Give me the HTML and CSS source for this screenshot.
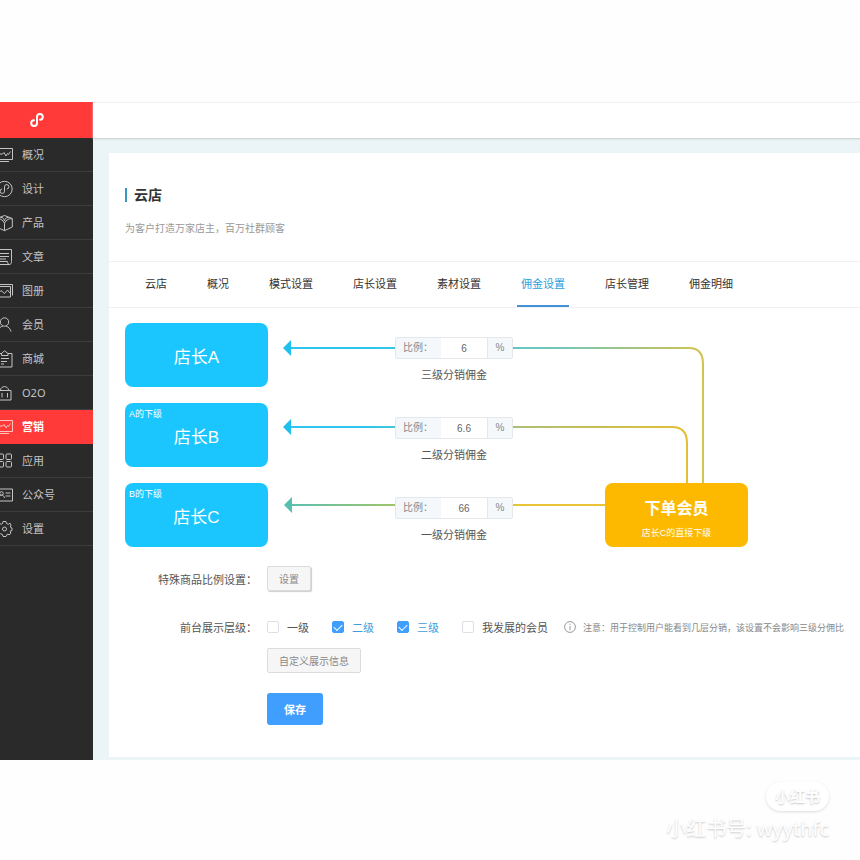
FILE: index.html
```html
<!DOCTYPE html>
<html lang="zh-CN">

<head>
    <meta charset="UTF-8">
    <meta name="viewport" content="width=device-width, initial-scale=1.0">
    <title>云店 - 佣金设置</title>
    <link rel="stylesheet" href="styles.css">
</head>

<body>
    <div class="app">
        <aside class="sidebar">
            <a href="#" class="logo" aria-label="首页">
                <svg width="14" height="14" viewBox="0 0 14 14">
                    <path d="M4 7.2A2.900 2.900 0 1 0 7 10V4A2.900 2.900 0 1 1 10 6.800" />
                </svg>
            </a>
            <nav class="menu">
                <a href="#">
                    <svg viewBox="5 0 13 18">
                        <path d="M1 2.5H17.5V13.5H1ZM2 15.5H14M3 8H7.5L9 6.5L11 10L12.5 7.5L13.5 8.5L15.5 5.5" />
                    </svg>
                    <span>概况</span>
                </a>
                <a href="#">
                    <svg viewBox="5 0 13 18">
                        <circle cx="9.5" cy="9" r="7.7" />
                        <path d="M7.2 9A2.200 2.200 0 1 0 9.5 11.200V6.800A2.200 2.200 0 1 1 11.800 9" />
                    </svg>
                    <span>设计</span>
                </a>
                <a href="#">
                    <svg viewBox="5 0 13 18">
                        <path d="M9.5 1.5L17.3 4.5V13L9.5 16.7L1.7 13V4.5ZM9.5 9.5V16.5M9.5 9.5C8 5.500 4 4 2 5M9.5 9.5C11 5.500 15 4 17 5M5.500 3.500C8 3 9 5 9.5 7C10 5 11 3 13.500 3.500" />
                    </svg>
                    <span>产品</span>
                </a>
                <a href="#">
                    <svg viewBox="5 0 13 18">
                        <path d="M3 1.500H16.500V13.500C16.500 17.500 12.500 17.500 12.500 13.500H1M4 16.500H14.500M5 5.500H14M5 8.500H14M5 11H11" />
                    </svg>
                    <span>文章</span>
                </a>
                <a href="#">
                    <svg viewBox="5 0 13 18">
                        <path d="M1 4.500H15.500V15H1ZM3 2.500H17.500V13.500M2 13L6 8.500L9.500 11.500L12.500 8L15 11" />
                    </svg>
                    <span>图册</span>
                </a>
                <a href="#">
                    <svg viewBox="5 0 13 18">
                        <circle cx="9.5" cy="6" r="4.200" />
                        <path d="M3 16C3.500 12 6 10.500 8 10M11 10C13.500 11 15.500 13 16 15.500" />
                    </svg>
                    <span>会员</span>
                </a>
                <a href="#">
                    <svg viewBox="5 0 13 18">
                        <path d="M7 3.500H2.500V17H17V3.500H13M6.500 5.500V3.500L9.5 0.800L13 3.500V5.500ZM6 8.500H14M6 11.500H12M6 14H9" />
                    </svg>
                    <span>商城</span>
                </a>
                <a href="#">
                    <svg viewBox="5 0 13 18">
                        <path d="M3 6.500H16V16H3ZM5.500 6C6 1.500 13 1.500 13.500 6M7 9V13.500M12.500 9V13.500" />
                    </svg>
                    <span>O2O</span>
                </a>
                <a href="#" class="active">
                    <svg viewBox="5 0 13 18">
                        <path d="M1 2.5H17.5V13.5H1ZM2 15.5H14M3 8H7.5L9 6.5L11 10L12.5 7.5L13.5 8.5L15.5 5.5" />
                    </svg>
                    <span>营销</span>
                </a>
                <a href="#">
                    <svg viewBox="5 0 13 18">
                        <rect x="3" y="2" width="5.500" height="5.500" rx="1" />
                        <rect x="11" y="2" width="5.500" height="5.500" rx="1" />
                        <rect x="3" y="9.500" width="5.500" height="5.500" rx="1" />
                        <rect x="11" y="9.500" width="5.500" height="5.500" rx="1" />
                    </svg>
                    <span>应用</span>
                </a>
                <a href="#">
                    <svg viewBox="5 0 13 18">
                        <path d="M1 3H17.5V15H1ZM10.500 7H15.500M10.500 10H15.500M3.500 12C4 9.500 5 9 6.500 9C8 9 9 10 9.500 12" />
                        <circle cx="6.500" cy="7.500" r="1.800" />
                    </svg>
                    <span>公众号</span>
                </a>
                <a href="#">
                    <svg viewBox="5 0 13 18">
                        <path d="M8 1.500H11L11.500 3.500L13.300 4.300L15 3.200L16 5L15.200 7L17 8V10.500L15.200 11.200L15.800 13.500L14 14.800L12.500 14L11 16.500H8L7.500 14.500L5.500 13.700L3.700 14.800L2.500 13L3.500 11L1.700 10V8L3.500 7L2.700 4.800L4.500 3.200L6.200 4.300L7.500 3.500Z" />
                        <circle cx="9.5" cy="9" r="2" />
                    </svg>
                    <span>设置</span>
                </a>
            </nav>
        </aside>

        <main class="main">
            <header class="topbar"></header>
            <div class="content">
                <section class="panel">
                    <h1 class="title">云店</h1>
                    <p class="desc">为客户打造万家店主，百万社群顾客</p>

                    <nav class="tabs">
                        <a href="#">云店</a>
                        <a href="#">概况</a>
                        <a href="#">模式设置</a>
                        <a href="#">店长设置</a>
                        <a href="#">素材设置</a>
                        <a href="#" class="active">佣金设置</a>
                        <a href="#">店长管理</a>
                        <a href="#">佣金明细</a>
                    </nav>

                    <div class="diagram">
                        <!-- commission flow lines -->
                        <svg class="lines" width="640" height="224" viewBox="0 0 640 224">
                            <defs>
                                <linearGradient id="line3" gradientUnits="userSpaceOnUse" x1="158" y1="0" x2="578" y2="60">
                                    <stop offset="0.2" stop-color="#2cc6ee" />
                                    <stop offset="0.65" stop-color="#74c6b8" />
                                    <stop offset="1" stop-color="#d6c24c" />
                                </linearGradient>
                                <linearGradient id="line2" gradientUnits="userSpaceOnUse" x1="158" y1="0" x2="562" y2="0">
                                    <stop offset="0.2" stop-color="#2cc6ee" />
                                    <stop offset="0.6" stop-color="#b0c070" />
                                    <stop offset="1" stop-color="#e2bf34" />
                                </linearGradient>
                                <linearGradient id="line1" gradientUnits="userSpaceOnUse" x1="158" y1="0" x2="480" y2="0">
                                    <stop offset="0" stop-color="#56bfb4" />
                                    <stop offset="0.35" stop-color="#a0c468" />
                                    <stop offset="0.75" stop-color="#ebc435" />
                                </linearGradient>
                            </defs>
                            <path d="M164 25H564Q578 25 578 41V162" stroke="url(#line3)" />
                            <path d="M164 104H547Q562 104 562 120V162" stroke="url(#line2)" />
                            <path d="M164 182H482" stroke="url(#line1)" />
                            <polygon points="158,25 166,17 166,33" fill="#1fc0ee" />
                            <polygon points="158,104 166,96 166,112" fill="#1fc0ee" />
                            <polygon points="159,182 167,174 167,190" fill="#56bfae" />
                        </svg>

                        <div class="level">
                            <div class="card"><strong>店长A</strong></div>
                            <div class="ratio">
                                <div class="input-group">
                                    <label for="ratio3">比例：</label>
                                    <input type="text" id="ratio3" value="6">
                                    <span>%</span>
                                </div>
                                <p>三级分销佣金</p>
                            </div>
                        </div>
                        <div class="level">
                            <div class="card"><small>A的下级</small><strong>店长B</strong></div>
                            <div class="ratio">
                                <div class="input-group">
                                    <label for="ratio2">比例：</label>
                                    <input type="text" id="ratio2" value="6.6">
                                    <span>%</span>
                                </div>
                                <p>二级分销佣金</p>
                            </div>
                        </div>
                        <div class="level">
                            <div class="card"><small>B的下级</small><strong>店长C</strong></div>
                            <div class="ratio">
                                <div class="input-group">
                                    <label for="ratio1">比例：</label>
                                    <input type="text" id="ratio1" value="66">
                                    <span>%</span>
                                </div>
                                <p>一级分销佣金</p>
                            </div>
                            <div class="member">
                                <strong>下单会员</strong>
                                <small>店长C的直接下级</small>
                            </div>
                        </div>
                    </div>

                    <form class="settings">
                        <div class="form-row">
                            <span class="form-label">特殊商品比例设置：</span>
                            <button type="button" class="btn btn-raised">设置</button>
                        </div>
                        <div class="form-row row-levels">
                            <span class="form-label">前台展示层级：</span>
                            <div class="checks">
                                <label><input type="checkbox"><span>一级</span></label>
                                <label><input type="checkbox" checked><span>二级</span></label>
                                <label><input type="checkbox" checked><span>三级</span></label>
                                <label><input type="checkbox"><span>我发展的会员</span></label>
                            </div>
                            <p class="note">
                                <svg width="12" height="12" viewBox="0 0 12 12">
                                    <circle cx="6" cy="6" r="5.400" />
                                    <path d="M6 2.800V4M6 5V9.200" />
                                </svg>
                                注意：用于控制用户能看到几层分销，该设置不会影响三级分佣比
                            </p>
                        </div>
                        <div class="form-actions">
                            <button type="button" class="btn">自定义展示信息</button>
                            <button type="submit" class="btn-save">保存</button>
                        </div>
                    </form>
                </section>
            </div>
        </main>
    </div>

    <footer class="watermark">
        <span class="badge">小红书</span>
        <span class="account">小红书号: wyythfc</span>
    </footer>
</body>

</html>
```

FILE: styles.css
```css
* {
    box-sizing: border-box;
}

body {
    margin: 0;
    padding-top: 102px;
    background-color: #fefefe;
    font-family: "Liberation Sans", "Noto Sans CJK SC", sans-serif;
    font-size: 11px;
    color: #555;
    overflow-x: hidden;
}

h1,
p {
    margin: 0;
}

a {
    color: inherit;
    text-decoration: none;
}

button,
input {
    font-family: inherit;
}

.app {
    display: flex;
}

/* Sidebar */
.sidebar {
    flex: none;
    width: 93px;
    background-color: #2a2a2a;
}

.logo {
    display: flex;
    align-items: center;
    height: 36px;
    padding-left: 30px;
    background-color: #ff3a38;
}

.logo svg {
    fill: none;
    stroke: #fff;
    stroke-width: 2;
    stroke-linecap: round;
}

.menu a {
    display: flex;
    align-items: center;
    gap: 9px;
    height: 34px;
    border-bottom: 1px solid #3d3d3d;
    font-family: "Noto Sans", "Noto Sans CJK SC", sans-serif;
    line-height: 16px;
    color: #c4c4c4;
}

.menu svg {
    width: 13px;
    height: 18px;
    fill: none;
    stroke: #c4c4c4;
    stroke-width: 1;
}

.menu .active {
    background-color: #ff3a38;
    border-color: #ff3a38;
    color: #fff;
    font-weight: bold;
}

.menu .active svg {
    stroke: #ffc4c0;
}

/* Main */
.main {
    flex: 1;
    min-width: 0;
    background-color: #ebf4f6;
}

.topbar {
    height: 36px;
    background-color: #fff;
    border-top: 1px solid #f3f3f3;
    box-shadow: 0 1px 2px #c4cccc;
}

.content {
    padding: 15px 0 3px 16px;
}

.panel {
    padding: 32px 0;
    background-color: #fff;
    overflow: hidden;
}

.title {
    display: flex;
    align-items: center;
    gap: 7px;
    margin-left: 16px;
    font-size: 14px;
    line-height: 20px;
    color: #333;
}

.title::before {
    content: "";
    width: 2px;
    height: 14px;
    background-color: #3a96c0;
}

.desc {
    margin: 14px 16px 22px;
    font-size: 10px;
    line-height: 20px;
    color: #999;
}

.tabs {
    display: flex;
    gap: 32px;
    height: 47px;
    padding-left: 32px;
    border-top: 1px solid #f0f1f2;
    border-bottom: 1px solid #f0f1f2;
    line-height: 44px;
    color: #333;
}

.tabs a {
    padding: 0 4px;
    white-space: nowrap;
}

.tabs .active {
    color: #2a9fdc;
    border-bottom: 2px solid #4292d8;
}

/* Diagram */
.diagram {
    position: relative;
    display: flex;
    flex-direction: column;
    gap: 16px;
    margin: 15px 16px 0;
}

.lines {
    position: absolute;
    top: 0;
    left: 0;
    fill: none;
    stroke-width: 2;
}

.level {
    display: flex;
    height: 64px;
}

.card,
.member {
    display: grid;
    flex: none;
    width: 143px;
    border-radius: 8px;
    color: #fff;
}

.card {
    place-items: center;
    background-color: #1ac6fd;
}

.card strong,
.card small {
    grid-area: 1 / 1;
}

.card strong {
    font-size: 17px;
    font-weight: normal;
}

.card small {
    place-self: start;
    padding: 4px;
    font-size: 9px;
}

.member {
    position: relative;
    align-content: center;
    justify-items: center;
    gap: 4px;
    margin-left: 92px;
    padding-top: 8px;
    background-color: #fdb900;
}

.member strong {
    font-size: 16px;
    line-height: 24px;
}

.member small {
    font-size: 9px;
    line-height: 16px;
}

.ratio {
    position: relative;
    flex: none;
    width: 118px;
    margin: 14px 0 0 127px;
}

.ratio p {
    margin-top: 6px;
    line-height: 20px;
    text-align: center;
}

.input-group {
    display: flex;
    height: 22px;
    border: 1px solid #e4e7ec;
    border-radius: 2px;
    background-color: #f5f8fb;
    font-size: 10px;
    line-height: 20px;
    color: #888;
}

.input-group label {
    width: 45px;
    padding-left: 7px;
}

.input-group input {
    width: 47px;
    padding: 0;
    border: 0;
    border-right: 1px solid #e4e7ec;
    background-color: #fff;
    font-size: 10px;
    text-align: center;
    color: #666;
}

.input-group span {
    flex: 1;
    text-align: center;
}

/* Form */
.settings {
    margin-top: 19px;
}

.form-row {
    display: flex;
    align-items: center;
}

.form-label {
    flex: none;
    width: 148px;
    margin-right: 10px;
    text-align: right;
}

.row-levels {
    height: 20px;
    margin-top: 26px;
}

.btn {
    height: 25px;
    padding: 0 11px;
    border: 1px solid #dcdcdc;
    border-radius: 2px;
    background-color: #f6f6f6;
    font-size: 10px;
    color: #888;
}

.btn-raised {
    box-shadow: 1px 1px 1px #ccc;
}

.checks {
    display: flex;
    flex: none;
    gap: 23px;
}

.checks label {
    display: flex;
    align-items: center;
    gap: 8px;
}

.checks input {
    appearance: none;
    display: grid;
    place-items: center;
    width: 12px;
    height: 12px;
    margin: 0;
    border: 1px solid #dcdfe6;
    border-radius: 2px;
    background-color: #fff;
}

.checks input:checked {
    border-color: #409eff;
    background-color: #409eff;
}

.checks input:checked::before {
    content: "";
    width: 7px;
    height: 4px;
    border: solid #fff;
    border-width: 0 0 1px 1px;
    transform: translateY(-1px) rotate(-45deg);
}

.checks input:checked + span {
    color: #409edc;
}

.note {
    display: flex;
    align-items: center;
    gap: 7px;
    margin-left: 16px;
    font-size: 9px;
    white-space: nowrap;
    color: #888;
}

.note svg {
    flex: none;
    fill: none;
    stroke: #999;
}

.form-actions {
    display: flex;
    flex-direction: column;
    align-items: flex-start;
    gap: 20px;
    margin: 11px 0 0 158px;
}

.btn-save {
    width: 56px;
    height: 32px;
    border: 0;
    border-radius: 3px;
    background-color: #409eff;
    font-size: 11px;
    font-weight: bold;
    color: #fff;
}

/* Watermark */
.watermark {
    display: flex;
    flex-direction: column;
    align-items: flex-end;
    gap: 4px;
    padding: 22px 31px 0 0;
    color: #fff;
    text-shadow: 0 1px 2px #c4c4c4;
}

.badge {
    padding: 0 9px;
    border-radius: 15px;
    background-color: #fff;
    box-shadow: 0 1px 3px #ddd;
    font-size: 15px;
    font-weight: bold;
    line-height: 29px;
}

.account {
    font-family: "Noto Sans", "Noto Sans CJK SC", sans-serif;
    font-size: 20px;
    line-height: 28px;
}
```
